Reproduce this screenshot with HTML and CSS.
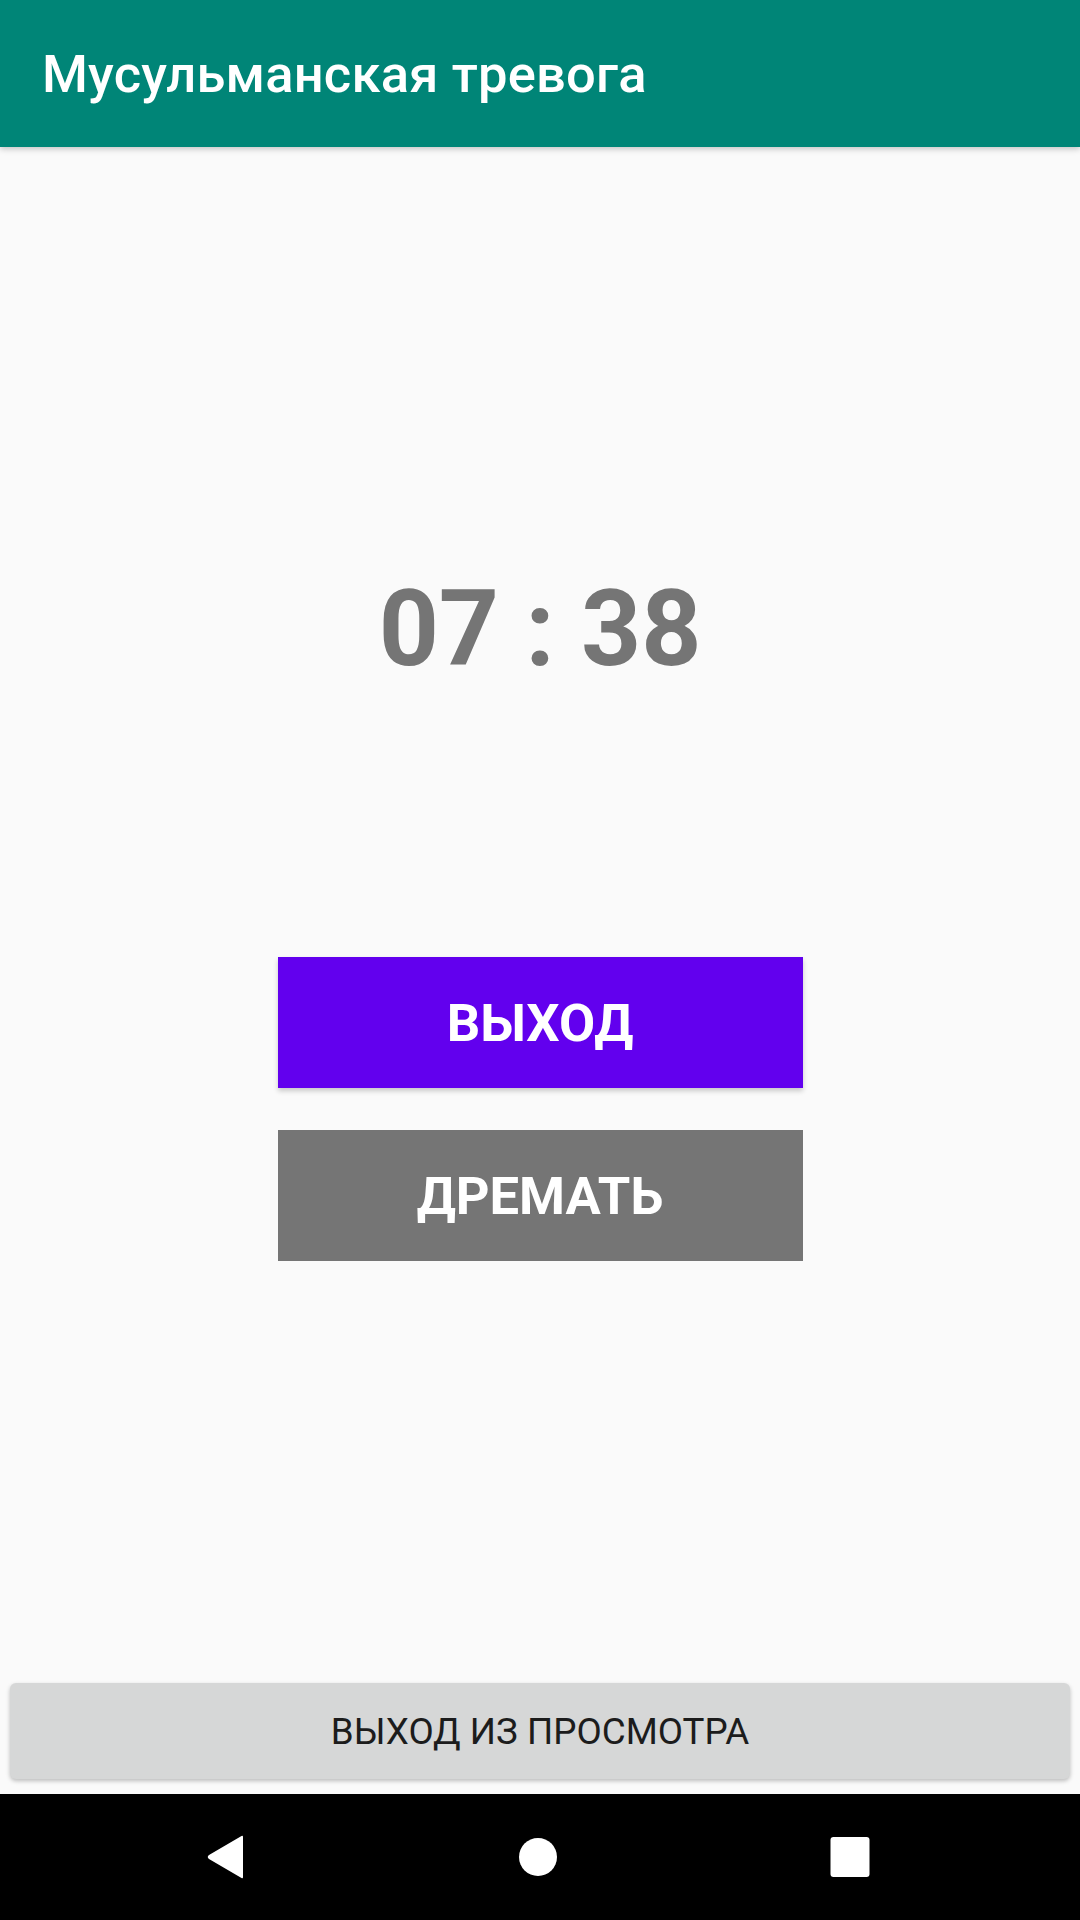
FILE: index.html
```html
<!DOCTYPE html>
<html lang="ru">
<head>
<meta charset="utf-8">
<link rel="stylesheet" href="styles.css">
</head>
<body>
<div class="screen">
  <header class="appbar"><span class="title">Мусульманская тревога</span></header>
  <main class="content">
    <div class="time">07 : 38</div>
    <div class="actions">
      <div class="btn btn-exit">ВЫХОД</div>
      <div class="btn btn-snooze">ДРЕМАТЬ</div>
    </div>
    <div class="preview-exit">ВЫХОД ИЗ ПРОСМОТРА</div>
  </main>
  <nav class="navbar">
    <svg class="nav-icon" width="40" height="44" viewBox="0 0 40 44"><path d="M38 2 L38 42 Q38 44 36.5 43 L4 24 Q1.5 22 4 20 L36.5 1 Q38 0 38 2 Z" fill="#fff"/></svg>
    <svg class="nav-icon" width="40" height="40" viewBox="0 0 40 40"><circle cx="20" cy="20" r="19" fill="#fff"/></svg>
    <svg class="nav-icon" width="40" height="40" viewBox="0 0 40 40"><rect x="0.5" y="0" width="39" height="40" rx="3" fill="#fff"/></svg>
  </nav>
</div>
</body>
</html>
```
FILE: styles.css
```css
html, body {
  margin: 0;
  padding: 0;
  background: #fafafa;
}
.screen {
  width: 1080px;
  height: 1920px;
  display: flex;
  flex-direction: column;
  font-family: Roboto, "Noto Sans", sans-serif;
}
.appbar {
  height: 147px;
  flex: none;
  background: #008577;
  display: flex;
  align-items: center;
  padding-left: 42px;
  box-shadow: 0 2px 6px rgba(0,0,0,0.22);
  position: relative;
  z-index: 1;
}
.title {
  color: #fff;
  font-size: 52.5px;
  font-weight: 500;
  letter-spacing: 0.2px;
}
.content {
  flex: 1;
  display: flex;
  flex-direction: column;
  align-items: center;
}
.time {
  margin-top: 430px;
  font-size: 105px;
  line-height: 106px;
  font-weight: 700;
  color: #757575;
  white-space: pre;
}
.actions {
  margin-top: 274px;
  display: flex;
  flex-direction: column;
  gap: 42px;
}
.btn {
  width: 525px;
  height: 131px;
  display: flex;
  align-items: center;
  justify-content: center;
  color: #fff;
  font-size: 52.5px;
  font-weight: 700;
}
.btn-exit {
  background: #6200ee;
  box-shadow: 0 3px 5px rgba(0,0,0,0.2);
}
.btn-snooze {
  background: #757575;
}
.preview-exit {
  margin: auto 10px 15px;
  align-self: stretch;
  height: 96px;
  border-radius: 6px;
  background: #d6d7d7;
  box-shadow: 0 2px 4px rgba(0,0,0,0.25);
  display: flex;
  align-items: center;
  justify-content: center;
  font-size: 36.75px;
  font-weight: 400;
  color: #1c1c1c;
}
.navbar {
  height: 126px;
  flex: none;
  background: #000;
  display: flex;
  align-items: center;
  justify-content: space-between;
  padding: 0 210px 0 205px;
}
.nav-icon {
  display: block;
}
```
